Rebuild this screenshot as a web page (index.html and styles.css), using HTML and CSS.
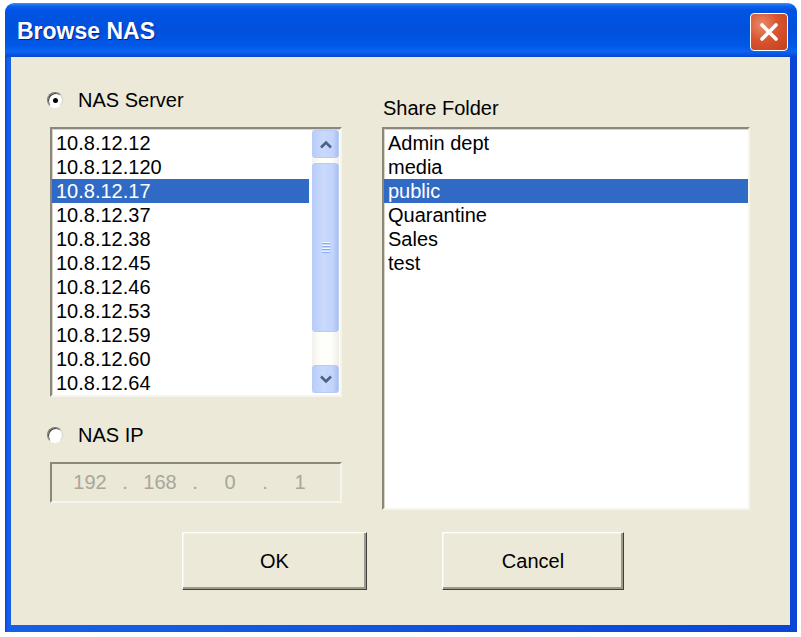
FILE: index.html
```html
<!DOCTYPE html>
<html lang="en">
<head>
  <meta charset="UTF-8" />
  <title>Browse NAS</title>
  <link rel="stylesheet" href="styles.css">
</head>
<body>
  <div class="window">
    <div class="titlebar">
      <span class="title">Browse NAS</span>
      <button class="close-btn" aria-label="Close">
        <svg width="22" height="22" viewBox="0 0 22 22"><path d="M4 4 L18 18 M18 4 L4 18" stroke="#fff" stroke-width="3.6" stroke-linecap="round"/></svg>
      </button>
    </div>
    <div class="frame">
      <div class="client">
        <div class="columns">
          <div class="col-left">
            <label class="radio-row">
              <span class="radio checked"></span>
              <span>NAS Server</span>
            </label>
            <div class="listbox server-list">
              <ul class="items">
                <li>10.8.12.12</li>
                <li>10.8.12.120</li>
                <li class="selected">10.8.12.17</li>
                <li>10.8.12.37</li>
                <li>10.8.12.38</li>
                <li>10.8.12.45</li>
                <li>10.8.12.46</li>
                <li>10.8.12.53</li>
                <li>10.8.12.59</li>
                <li>10.8.12.60</li>
                <li>10.8.12.64</li>
              </ul>
              <div class="scrollbar">
                <div class="sb-btn sb-up">
                  <svg width="14" height="9" viewBox="0 0 14 9"><path d="M2 7.5 L7 2.5 L12 7.5" fill="none" stroke="#4d6185" stroke-width="2.6"/></svg>
                </div>
                <div class="sb-thumb">
                  <svg width="10" height="13" viewBox="0 0 10 13"><path d="M1 1.5 H9 M1 4.5 H9 M1 7.5 H9 M1 10.5 H9" stroke="#eef3fe" stroke-width="1"/><path d="M1 2.5 H9 M1 5.5 H9 M1 8.5 H9 M1 11.5 H9" stroke="#8cabf0" stroke-width="1"/></svg>
                </div>
                <div class="sb-track"></div>
                <div class="sb-btn sb-down">
                  <svg width="14" height="9" viewBox="0 0 14 9"><path d="M2 1.5 L7 6.5 L12 1.5" fill="none" stroke="#4d6185" stroke-width="2.6"/></svg>
                </div>
              </div>
            </div>
            <label class="radio-row ip-radio">
              <span class="radio"></span>
              <span>NAS IP</span>
            </label>
            <div class="ip-box">
              <span>192</span><span>.</span><span>168</span><span>.</span><span>0</span><span>.</span><span>1</span>
            </div>
          </div>
          <div class="col-right">
            <div class="field-label">Share Folder</div>
            <div class="listbox share-list">
              <ul class="items">
                <li>Admin dept</li>
                <li>media</li>
                <li class="selected">public</li>
                <li>Quarantine</li>
                <li>Sales</li>
                <li>test</li>
              </ul>
            </div>
          </div>
        </div>
        <div class="buttons">
          <button class="btn btn-ok">OK</button>
          <button class="btn btn-cancel">Cancel</button>
        </div>
      </div>
    </div>
  </div>
</body>
</html>
```

FILE: styles.css
```css
body {
  margin: 0;
  background: #fff;
  font-family: 'Liberation Sans', Arial, sans-serif;
}
.window {
  width: 792px;
  margin: 3px 0 0 5px;
  border-radius: 9px 9px 0 0;
  overflow: hidden;
}
.titlebar {
  height: 54px;
  display: flex;
  align-items: center;
  justify-content: space-between;
  padding: 0 9px 0 12px;
  background: linear-gradient(#3d8ef7 0, #0b5fea 6%, #0054e3 14%, #0050dc 50%, #0057e6 78%, #0a63f2 90%, #0847cf 100%);
}
.title {
  color: #fff;
  font-size: 23px;
  font-weight: 700;
  text-shadow: 1px 1px 0 #0a1c8c;
  margin-top: 2px;
}
.close-btn {
  width: 38px;
  height: 38px;
  margin-top: 3px;
  padding: 0;
  border: 1px solid #fff;
  border-radius: 4px;
  background: radial-gradient(circle at 30% 30%, #e98a6c 0%, #d9542f 45%, #c2401c 100%);
  display: flex;
  align-items: center;
  justify-content: center;
}
.frame {
  padding: 0 7px 7px 6px;
  background: linear-gradient(90deg, #0a46d6 0, #1660e8 3px, #0a46d6 100%);
}
.client {
  background: #ece9d8;
  padding: 30px 0 35px 39px;
  font-size: 20px;
  color: #000;
}
.columns {
  display: grid;
  grid-template-columns: 292px 368px;
  column-gap: 40px;
  align-items: start;
}
.radio-row {
  height: 26px;
  display: flex;
  align-items: center;
  gap: 15px;
  margin-left: -3px;
  margin-bottom: 14px;
}
.ip-radio { margin-top: 25px; }
.radio {
  width: 14px;
  height: 14px;
  border-radius: 50%;
  border: 1px solid;
  border-color: #7c7a6c #d8d5c6 #fff #7c7a6c;
  background: radial-gradient(circle at 60% 60%, #fff 55%, #e4e2d6 100%);
  box-shadow: inset 1px 1px 0 #404040;
  display: flex;
  align-items: center;
  justify-content: center;
}
.radio.checked::after {
  content: '';
  width: 5px;
  height: 5px;
  border-radius: 50%;
  background: #000;
}
.listbox {
  background: #fff;
  border: 2px solid;
  border-color: #8a887c #f5f4ee #f5f4ee #8a887c;
  box-shadow: inset 1px 1px 0 #d8d5c8;
}
.server-list {
  height: 270px;
  box-sizing: border-box;
  display: flex;
}
.share-list {
  height: 383px;
  box-sizing: border-box;
}
.items {
  list-style: none;
  margin: 0;
  padding: 2px 0 0 0;
  flex: 1;
}
.items li {
  height: 24px;
  line-height: 24px;
  padding-left: 4px;
}
.items li.selected {
  background: #316ac5;
  color: #fff;
}
.scrollbar {
  width: 27px;
  margin: 1px 1px 2px 3px;
  display: flex;
  flex-direction: column;
  background: linear-gradient(90deg, #f3f1ec, #fefefb 30%, #fefefb 70%, #f0eee6);
}
.sb-btn, .sb-thumb {
  border: 1px solid #b7cbf5;
  border-radius: 3px;
  background: linear-gradient(90deg, #b9cdfa, #cad9fc 40%, #c2d4fb 80%, #a9bff0);
  display: flex;
  align-items: center;
  justify-content: center;
}
.sb-btn { height: 26px; }
.sb-up { margin-bottom: 5px; }
.sb-thumb { height: 167px; }
.sb-track { flex: 1; }
.ip-box {
  height: 41px;
  box-sizing: border-box;
  border: 2px solid;
  border-color: #8a887c #f5f4ee #f5f4ee #8a887c;
  background: #ebe8d7;
  color: #a8a699;
  display: grid;
  grid-template-columns: 56px 14px 56px 14px 56px 14px 56px;
  align-items: center;
  padding-left: 10px;
  text-align: center;
}
.field-label {
  height: 26px;
  line-height: 26px;
  margin: 8px 0 6px 1px;
}
.buttons {
  display: flex;
  gap: 75px;
  margin-top: 22px;
  padding-left: 132px;
}
.btn {
  height: 58px;
  font-family: 'Liberation Sans', Arial, sans-serif;
  font-size: 20px;
  color: #000;
  background: #ece9d8;
  border: 1px solid;
  border-color: #fffffb #404040 #404040 #fffffb;
  box-shadow: inset -2px -2px 0 #9d9a8c, inset 1px 1px 0 #f4f2e8;
}
.btn-ok { width: 185px; }
.btn-cancel { width: 182px; }
```
